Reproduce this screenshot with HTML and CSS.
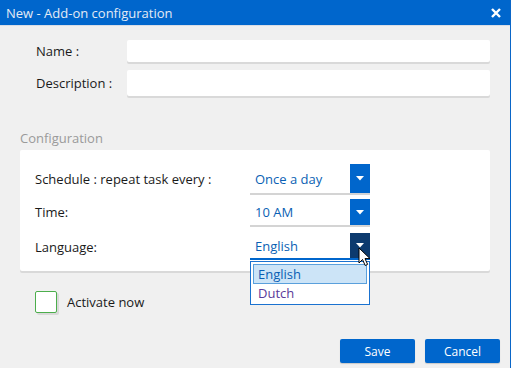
FILE: index.html
```html
<!DOCTYPE html>
<html>
<head>
<meta charset="utf-8">
<link rel="stylesheet" href="styles.css">
</head>
<body>
<div class="window">
  <div class="titlebar">
    <span class="title">New - Add-on configuration</span>
    <svg class="close" width="10" height="10" viewBox="0 0 10 10"><path d="M1 1L9 9M9 1L1 9" stroke="#fff" stroke-width="2.4"/></svg>
  </div>
  <div class="body">
    <div class="field">
      <label class="flabel">Name :</label>
      <div class="input"></div>
    </div>
    <div class="field desc">
      <label class="flabel">Description :</label>
      <div class="input tall"></div>
    </div>
    <div class="section-title">Configuration</div>
    <div class="panel">
      <div class="row r1">
        <span class="rlabel">Schedule : repeat task every :</span>
        <div class="select"><span class="val">Once a day</span><span class="btn"><svg width="8" height="5" viewBox="0 0 8 5"><path d="M0 0H8L4 4.5Z" fill="#fff"/></svg></span></div>
      </div>
      <div class="row r2">
        <span class="rlabel">Time:</span>
        <div class="select"><span class="val">10 AM</span><span class="btn"><svg width="8" height="5" viewBox="0 0 8 5"><path d="M0 0H8L4 4.5Z" fill="#fff"/></svg></span></div>
      </div>
      <div class="row r3">
        <span class="rlabel">Language:</span>
        <div class="select open"><span class="val">English</span><span class="btn dark"><svg width="8" height="5" viewBox="0 0 8 5"><path d="M0 0H8L4 4.5Z" fill="#fff"/></svg></span>
          <div class="menu">
            <div class="opt sel">English</div>
            <div class="opt">Dutch</div>
          </div>
          <svg class="cursor" width="14" height="20" viewBox="0 0 14 20"><path d="M1 1V16L4.5 12.5L7.2 18.5L9.6 17.4L7 11.6H12Z" fill="#fff" stroke="#000" stroke-width="1" stroke-linejoin="round"/></svg>
        </div>
      </div>
    </div>
    <div class="check-row">
      <span class="checkbox"></span>
      <span class="clabel">Activate now</span>
    </div>
    <div class="actions">
      <button class="b">Save</button>
      <button class="b">Cancel</button>
    </div>
  </div>
</div>
</body>
</html>
```
FILE: styles.css
```css
* { box-sizing: border-box; }
html, body { margin: 0; padding: 0; }
body {
  width: 511px; height: 368px; overflow: hidden;
  font-family: "Segoe UI", "Open Sans", "Noto Sans", sans-serif;
  font-size: 13px; color: #1a1a1a; background: #f0f0f0;
}
.window {
  width: 511px; height: 368px;
  border-right: 1px solid #0a66c8;
  display: flex; flex-direction: column;
}
.titlebar {
  height: 26px; background: #0066cc;
  display: flex; align-items: center; justify-content: space-between;
  padding: 0 9px 0 6px;
  border-bottom: 1px solid #d8dde6;
}
.title { color: #e4ebf5; font-size: 13px; }
.close { display: block; }
.body { padding: 14px 20px 0 20px; flex: 1; display: flex; flex-direction: column; }
.field { display: flex; align-items: center; height: 22px; }
.field.desc { margin-top: 7px; height: 27px; }
.flabel { width: 107px; padding-left: 16px; font-size: 13px; }
.input {
  flex: 1; height: 22px; background: #fff; border-radius: 2px;
  box-shadow: 0 2px 0 #d9d9d9;
}
.input.tall { height: 26px; }
.section-title { margin-top: 33px; color: #9a9a9a; font-size: 13px; height: 18px; line-height: 18px; }
.panel {
  margin-top: 3px; background: #fff; border-radius: 2px;
  box-shadow: 0 2px 0 #d9d9d9;
  padding: 14px 0 11px 15px;
  display: flex; flex-direction: column;
}
.row { display: flex; align-items: center; }
.r1 { height: 29px; }
.r2 { height: 26px; margin-top: 6px; }
.r3 { height: 27px; margin-top: 8px; }
.rlabel { width: 215px; }
.select {
  position: relative; width: 120px; height: 100%;
  display: flex; box-shadow: 0 2px 0 #d4d4d4;
}
.val { flex: 1; color: #0a5fb4; padding-left: 5px; display: flex; align-items: center; }
.btn { width: 20px; background: #0066cc; display: flex; align-items: center; justify-content: center; }
.btn.dark { background: #0c3a6e; }
.select.open { box-shadow: none; border-bottom: 2px solid #0066cc; }
.menu {
  position: absolute; left: 0; top: 100%; margin-top: 3px; width: 120px;
  background: #fff; border: 1px solid #1a72d0; padding: 2px 2px 0 2px;
  z-index: 3;
}
.opt { height: 20px; line-height: 19px; padding-left: 5px; color: #5a3a9a; }
.opt.sel { background: #cce4f7; border: 1px solid #5aa0dc; color: #0a5fb4; padding-left: 4px; }
.cursor { position: absolute; left: 108px; top: 14px; z-index: 4; }
.check-row { display: flex; align-items: center; margin-top: 20px; padding-left: 15px; }
.checkbox {
  width: 22px; height: 22px; border: 1px solid #4cae4c; border-radius: 2px; background: #fff;
  box-shadow: 2px 2px 0 #d9d9d9;
}
.clabel { margin-left: 10px; }
.actions { margin-top: auto; margin-bottom: 5px; display: flex; justify-content: flex-end; gap: 10px; margin-right: -10px; }
.b {
  width: 75px; height: 24px; border: none; border-radius: 2px; background: #0066cc; color: #fff;
  font-family: inherit; font-size: 12px; box-shadow: 0 1px 1px #c8c8c8; padding: 0;
}
```
